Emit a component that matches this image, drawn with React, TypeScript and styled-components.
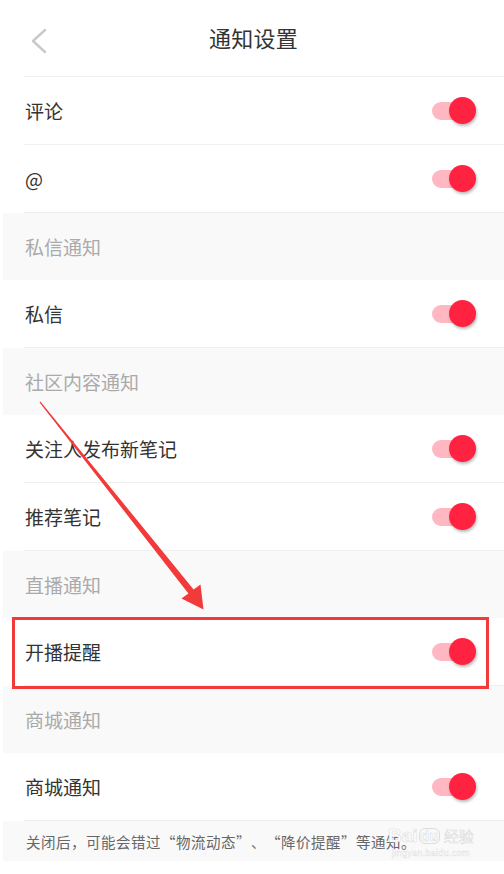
import React from "react";
import styled, { createGlobalStyle } from "styled-components";

const GlobalStyle = createGlobalStyle`
  html, body {
    margin: 0;
    padding: 0;
    background: #ffffff;
  }
  body {
    font-family: "Noto Sans CJK SC", "Noto Sans", sans-serif;
    -webkit-font-smoothing: antialiased;
  }
`;

const Page = styled.div`
  position: relative;
  width: 504px;
  height: 874px;
  overflow: hidden;
  background: #ffffff;
`;

const Screen = styled.div`
  margin-left: 3px;
  width: 501px;
  display: flex;
  flex-direction: column;
`;

const Header = styled.div`
  position: relative;
  height: 76px;
  display: flex;
  align-items: center;
  justify-content: center;
  background: #ffffff;
`;

const BackButton = styled.div`
  position: absolute;
  left: 26px;
  top: 28px;
  width: 18px;
  height: 26px;
  display: flex;
`;

const Title = styled.div`
  font-size: 22px;
  color: #333333;
  letter-spacing: 0.3px;
  margin-top: -2px;
`;

const HeaderDivider = styled.div`
  height: 1px;
  margin-left: 21px;
  background: #efefef;
`;

const Row = styled.div`
  position: relative;
  height: 68px;
  padding-left: 21px;
  background: #ffffff;
  box-sizing: border-box;
`;

const RowInner = styled.div`
  height: 100%;
  display: flex;
  align-items: center;
  justify-content: space-between;
  border-bottom: 1px solid #efefef;
  box-sizing: border-box;
  padding-right: 28px;
`;

const Label = styled.div`
  font-size: 19px;
  color: #333333;
  padding-left: 1px;
`;

const Section = styled.div`
  height: 67px;
  display: flex;
  align-items: center;
  padding-left: 22px;
  background: #f9f9f9;
  font-size: 19px;
  color: #aaaaaa;
  box-sizing: border-box;
`;

const Toggle = styled.div`
  position: relative;
  width: 44px;
  height: 28px;
  flex: none;
`;

const Track = styled.div`
  position: absolute;
  left: 0;
  top: 5px;
  width: 40px;
  height: 18px;
  border-radius: 9px;
  background: #ffb8c2;
`;

const Thumb = styled.div`
  position: absolute;
  left: 17px;
  top: 0;
  width: 27px;
  height: 27px;
  border-radius: 50%;
  background: #ff2341;
  box-shadow: 1px 2px 3px rgba(0, 0, 0, 0.28);
`;

const Footer = styled.div`
  height: 40px;
  display: flex;
  align-items: center;
  padding-left: 23px;
  background: #f9f9f9;
  font-size: 14.5px;
  letter-spacing: 0.5px;
  font-feature-settings: "fwid" 1;
  text-spacing-trim: space-all;
  color: #666666;
  box-sizing: border-box;
`;

const Highlight = styled.div`
  position: absolute;
  left: 9px;
  top: -1px;
  width: 477px;
  height: 72px;
  border: 3px solid #f23a3a;
  box-sizing: border-box;
  pointer-events: none;
`;

const Overlay = styled.svg`
  position: absolute;
  left: 0;
  top: 0;
  pointer-events: none;
`;

const Watermark = styled.div`
  position: absolute;
  left: 388px;
  top: 826px;
  display: flex;
  flex-direction: column;
  align-items: center;
  pointer-events: none;
  color: #ffffff;
  font-family: "Liberation Sans", Arial, sans-serif;
`;

const WatermarkMain = styled.div`
  display: flex;
  align-items: center;
  gap: 1px;
  font-size: 19px;
  font-weight: bold;
  -webkit-text-stroke: 0.6px #dddddd;
  line-height: 1;
`;

const WatermarkDu = styled.span`
  border: 1px solid #dddddd;
  border-radius: 6px;
  padding: 0 1px;
  font-size: 14px;
`;

const WatermarkCn = styled.span`
  font-family: "Noto Sans CJK SC", sans-serif;
  font-size: 15px;
  font-weight: normal;
  margin-left: 3px;
`;

const WatermarkUrl = styled.div`
  font-size: 9px;
  margin-top: 3px;
  -webkit-text-stroke: 0.4px #e0e0e0;
  letter-spacing: 0.3px;
`;

const Switch: React.FC = () => (
  <Toggle>
    <Track />
    <Thumb />
  </Toggle>
);

type Item =
  | { kind: "row"; label: string; highlight?: boolean }
  | { kind: "section"; label: string };

const items: Item[] = [
  { kind: "row", label: "评论" },
  { kind: "row", label: "@" },
  { kind: "section", label: "私信通知" },
  { kind: "row", label: "私信" },
  { kind: "section", label: "社区内容通知" },
  { kind: "row", label: "关注人发布新笔记" },
  { kind: "row", label: "推荐笔记" },
  { kind: "section", label: "直播通知" },
  { kind: "row", label: "开播提醒", highlight: true },
  { kind: "section", label: "商城通知" },
  { kind: "row", label: "商城通知" },
];

export default function App() {
  return (
    <>
      <GlobalStyle />
      <Page>
        <Screen>
          <Header>
            <BackButton>
              <svg width="18" height="26" viewBox="0 0 18 26">
                <polyline
                  points="16,2 4,13 16,24"
                  fill="none"
                  stroke="#c9c9c9"
                  strokeWidth="2.4"
                  strokeLinecap="round"
                  strokeLinejoin="round"
                />
              </svg>
            </BackButton>
            <Title>通知设置</Title>
          </Header>
          <HeaderDivider />
          {items.map((it, i) =>
            it.kind === "section" ? (
              <Section key={i}>{it.label}</Section>
            ) : (
              <Row key={i}>
                <RowInner>
                  <Label>{it.label}</Label>
                  <Switch />
                </RowInner>
                {it.highlight && <Highlight />}
              </Row>
            )
          )}
          <Footer>关闭后，可能会错过“物流动态”、“降价提醒”等通知。</Footer>
        </Screen>
        <Overlay width="504" height="874" viewBox="0 0 504 874">
          <polygon
            points="40.4,401.6 193.6,589.4 200.5,584.5 203.5,609.5 181.5,598.5 188.4,593.6 39.6,402.4"
            fill="#f23a3a"
          />
        </Overlay>
        <Watermark>
          <WatermarkMain>
            <span>Bai</span>
            <WatermarkDu>du</WatermarkDu>
            <WatermarkCn>经验</WatermarkCn>
          </WatermarkMain>
          <WatermarkUrl>jingyan.baidu.com</WatermarkUrl>
        </Watermark>
      </Page>
    </>
  );
}
